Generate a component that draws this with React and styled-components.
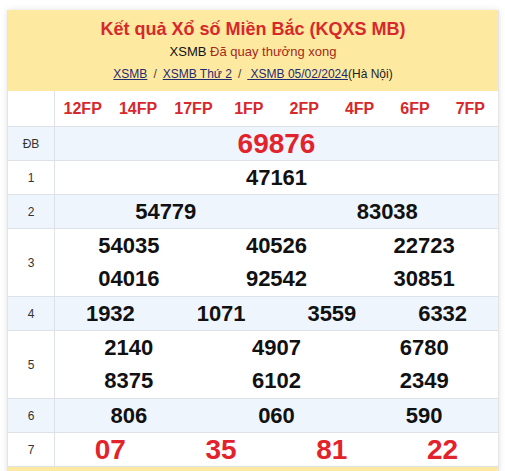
import styled, { createGlobalStyle } from "styled-components";

const GlobalStyle = createGlobalStyle`
  body {
    margin: 0;
    background: #ffffff;
    font-family: "Liberation Sans", Arial, sans-serif;
  }
`;

const codes = ["12FP", "14FP", "17FP", "1FP", "2FP", "4FP", "6FP", "7FP"];

const prizes = [
  { label: "ĐB", cols: 1, nums: ["69876"], special: true },
  { label: "1", cols: 1, nums: ["47161"] },
  { label: "2", cols: 2, nums: ["54779", "83038"] },
  { label: "3", cols: 3, nums: ["54035", "40526", "22723", "04016", "92542", "30851"] },
  { label: "4", cols: 4, nums: ["1932", "1071", "3559", "6332"] },
  { label: "5", cols: 3, nums: ["2140", "4907", "6780", "8375", "6102", "2349"] },
  { label: "6", cols: 3, nums: ["806", "060", "590"] },
  { label: "7", cols: 4, nums: ["07", "35", "81", "22"], red: true },
];

export default function App() {
  return (
    <>
      <GlobalStyle />
      <Card>
        <Header>
          <Title>Kết quả Xổ số Miền Bắc (KQXS MB)</Title>
          <SubTitle>
            XSMB <span>Đã quay thưởng xong</span>
          </SubTitle>
          <Crumbs>
            <a href="#">XSMB</a>
            <Sep>/</Sep>
            <a href="#">XSMB Thứ 2</a>
            <Sep>/</Sep>
            <a href="#">&nbsp;XSMB 05/02/2024</a>(Hà Nội)
          </Crumbs>
        </Header>

        <Table>
          <Row $tall={35}>
            <Label />
            <Codes>
              {codes.map((c) => (
                <Code key={c}>{c}</Code>
              ))}
            </Codes>
          </Row>

          {prizes.map((p, i) => (
            <Row key={p.label} $alt={i % 2 === 0}>
              <Label>{p.label}</Label>
              <Numbers $cols={p.cols} $double={p.nums.length > p.cols}>
                {p.nums.map((n, j) => (
                  <Num key={j} $special={p.special} $red={p.red}>
                    {n}
                  </Num>
                ))}
              </Numbers>
            </Row>
          ))}
        </Table>
        <Footer />
      </Card>
    </>
  );
}

const Card = styled.div`
  width: 492px;
  margin: 10px 0 0 7px;
  box-shadow: 0 0 6px rgba(0, 0, 0, 0.12);
  border-left: 1px solid #e4e4e4;
  border-right: 1px solid #e4e4e4;
  box-sizing: border-box;
`;

const Header = styled.div`
  background: #fee9a0;
  padding: 8px 0 7px;
  text-align: center;
`;

const Title = styled.h1`
  margin: 0 0 2px;
  font-size: 18px;
  line-height: 22px;
  font-weight: bold;
  color: #d7282c;
`;

const SubTitle = styled.div`
  margin-bottom: 2px;
  font-size: 13px;
  line-height: 20px;
  color: #111;

  span {
    color: #a42a1c;
  }
`;

const Crumbs = styled.div`
  font-size: 12px;
  line-height: 20px;
  color: #222;

  a {
    color: #1f2a70;
    text-decoration: underline;
  }
`;

const Sep = styled.span`
  margin: 0 6px;
  color: #444;
`;

const Table = styled.div`
  display: flex;
  flex-direction: column;
`;

const Row = styled.div`
  display: grid;
  grid-template-columns: 47px 1fr;
  min-height: ${(p) => p.$tall || 33}px;
  border-bottom: 1px solid #dde2e8;
  background: ${(p) => (p.$alt ? "#eef5fd" : "#ffffff")};
`;

const Label = styled.div`
  display: flex;
  align-items: center;
  justify-content: center;
  border-right: 1px solid #dde2e8;
  font-size: 12px;
  color: #333;
`;

const Codes = styled.div`
  display: grid;
  grid-template-columns: repeat(8, 1fr);
  align-items: center;
  justify-items: center;
`;

const Code = styled.span`
  font-size: 16px;
  font-weight: bold;
  color: #d7282c;
`;

const Numbers = styled.div`
  display: grid;
  grid-template-columns: repeat(${(p) => p.$cols}, 1fr);
  grid-auto-rows: ${(p) => (p.$double ? 33.5 : 33)}px;
  align-items: center;
  justify-items: center;
`;

const Num = styled.span`
  font-weight: bold;
  font-size: ${(p) => (p.$special ? 28 : p.$red ? 28 : 22)}px;
  color: ${(p) => (p.$special || p.$red ? "#e2232b" : "#111")};
`;

const Footer = styled.div`
  height: 12px;
  background: #fee9a0;
`;
